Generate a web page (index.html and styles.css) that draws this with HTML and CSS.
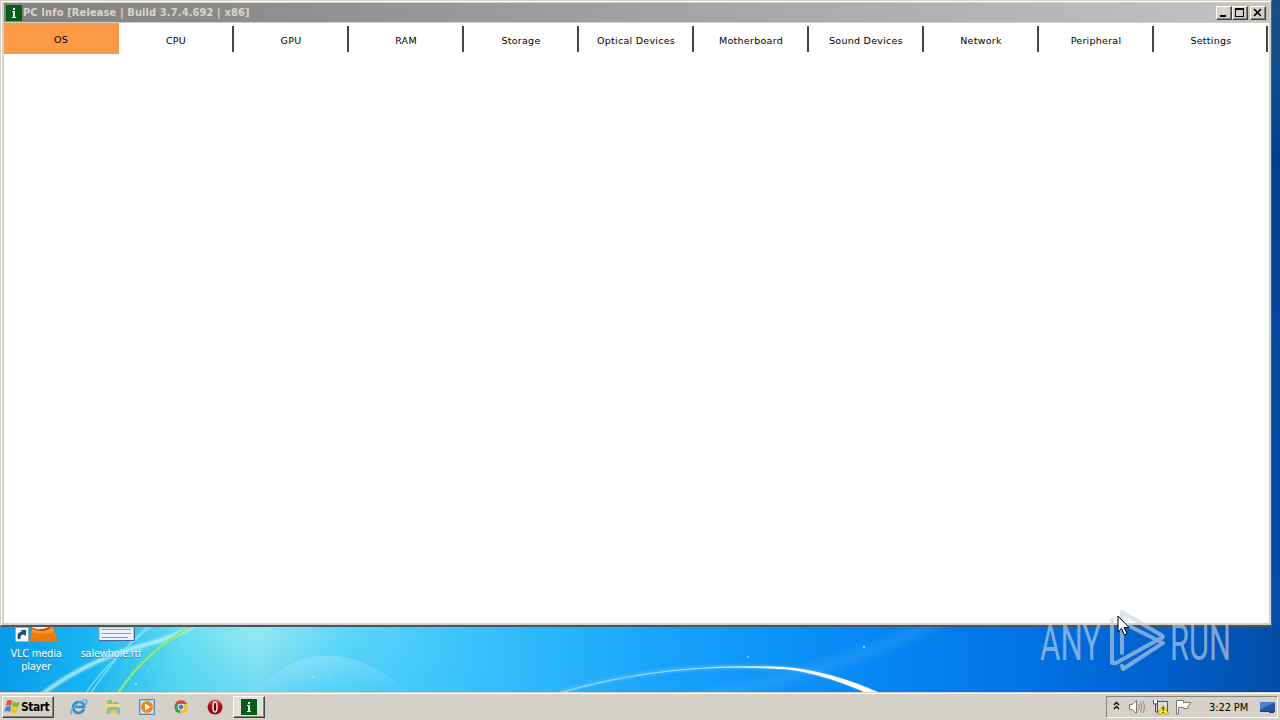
FILE: index.html
```html
<!DOCTYPE html>
<html lang="en">
<head>
<meta charset="utf-8">
<title>PC Info</title>
<link rel="stylesheet" href="styles.css">
</head>
<body>
<main class="desktop">
  <svg class="wallpaper" viewBox="0 0 1280 692" aria-hidden="true">
    <defs>
      <linearGradient id="sky"><stop offset="0" stop-color="#079be9"/><stop offset=".07" stop-color="#18b5f2"/><stop offset=".14" stop-color="#60dcf0"/><stop offset=".2" stop-color="#94e8f1"/><stop offset=".27" stop-color="#5bd6f8"/><stop offset=".38" stop-color="#35bffb"/><stop offset=".53" stop-color="#16a0fa"/><stop offset=".66" stop-color="#078af5"/><stop offset=".8" stop-color="#0073e4"/><stop offset=".91" stop-color="#0060cc"/><stop offset="1" stop-color="#014ba5"/></linearGradient>
      <linearGradient id="edge" x2="0" y2="1"><stop offset="0" stop-color="#154f80"/><stop offset=".12" stop-color="#104b8d"/><stop offset=".25" stop-color="#043f8d"/><stop offset=".65" stop-color="#0249a2"/><stop offset="1" stop-color="#034ca8"/></linearGradient>
      <linearGradient id="dome" x2="0" y2="1"><stop offset="0" stop-color="#fff" stop-opacity=".2"/><stop offset="1" stop-color="#fff" stop-opacity=".02"/></linearGradient>
      <radialGradient id="low"><stop offset="0" stop-color="#20bbfa" stop-opacity=".4"/><stop offset="1" stop-color="#20bbfa" stop-opacity="0"/></radialGradient>
      <linearGradient id="arc"><stop offset="0" stop-color="#78d8ff"/><stop offset=".5" stop-color="#b2e4ff"/><stop offset=".7" stop-color="#fff"/></linearGradient>
      <filter id="soft" x="-20%" y="-50%" width="140%" height="200%"><feGaussianBlur stdDeviation="1.2"/></filter>
      <filter id="haze" x="-20%" y="-50%" width="140%" height="200%"><feGaussianBlur stdDeviation="5"/></filter>
    </defs>
    <rect width="1280" height="692" fill="url(#sky)"/>
    <ellipse cx="290" cy="700" rx="240" ry="66" fill="url(#low)"/>
    <rect x="1271" width="9" height="626" fill="url(#edge)"/>
    <path d="M252 692Q326 619 408 692Z" fill="url(#dome)"/>
    <path d="M680 700Q830 676 940 620" stroke="#5cbbff" stroke-width="9" opacity=".3" fill="none" filter="url(#haze)"/>
    <g fill="none">
      <path d="M42 694Q91 658 148 644Q176 637 195 625" stroke="#c8f5ff" stroke-width="4" opacity=".8" filter="url(#soft)"/>
      <path d="M85 694Q106 663 153 625M90 694Q112 660 147 627" stroke="#9ce7ff" stroke-width="1.4" opacity=".75"/>
      <path d="M118 693Q148 649 192 626" stroke="#92e870" stroke-width="2.3"/>
    </g>
    <path d="M560 692C655 665 735 665 785 668C817 671 844 680 868 692" fill="none" stroke="#57b9ff" stroke-width="5" opacity=".55" filter="url(#soft)"/>
    <path d="M560 692C655 665 735 665 785 667Q830 671 878 692H864C828 676 795 669 778 669C724 666 655 667 566 692Z" fill="url(#arc)"/>
    <g fill="#a8e8ff" opacity=".75"><circle cx="136" cy="684" r="1.3"/><circle cx="148" cy="670" r=".8"/><circle cx="155" cy="665" r=".7"/><circle cx="313" cy="677" r="1.2"/><circle cx="329" cy="675" r=".8"/><circle cx="748" cy="657" r="1"/><circle cx="864" cy="647" r="1.2"/></g>
  </svg>

  <div class="shortcut vlc">
    <svg width="48" height="18" viewBox="0 0 48 18"><path d="M18 0H39L44 14.500H16Z" fill="#ed7c0b"/><path d="M18 0H39L40 5Q29 8 18 5Z" fill="#f89722"/><path d="M16 0H37Q34 4 28 4Q20 4 16 0Z" fill="#d2450d"/><path d="M17 0H35Q29 3 22 2Z" fill="#eee"/><path d="M1.500.500H14.500V14.500H1.500Z" fill="#f6f8fa" stroke="#aaa"/><path d="M4 12C3 7 4 5 8 5L6.500 3H12V9L10 7.500C7 7.500 6 9 6.500 12Z" fill="#174f8d"/></svg>
    <span>VLC media<br>player</span>
  </div>
  <div class="shortcut document">
    <svg width="38" height="18" viewBox="0 0 38 18"><path d="M1 0H36V13.500H1Z" fill="#edf3fc" stroke="#8da0c7"/><path d="M3.500 2.500H33M3.500 6.500H33M3.500 10.500H30" stroke="#809bd0"/><path d="M1 13.500H36.500V0" stroke="#496597" fill="none"/></svg>
    <span>salewhole.rtf</span>
  </div>

  <section class="window">
    <header class="titlebar">
      <svg class="app-icon" width="16" height="16" viewBox="0 0 16 16"><path d="M0 0H16V16H0Z" fill="#075c18"/><path d="M7 3H9V5H7ZM6 6H9V12H10V13H6V12H7V7H6Z" fill="#e9efe9"/></svg>
      <h1>PC Info [Release | Build 3.7.4.692 | x86]</h1>
      <div class="controls">
        <button aria-label="Minimize"><svg width="12" height="10" viewBox="0 0 12 10"><path d="M2 7H8V9H2Z"/></svg></button>
        <button aria-label="Maximize"><svg width="12" height="10" viewBox="0 0 12 10"><path fill-rule="evenodd" d="M1 0H10V9H1ZM2 2V8H9V2Z"/></svg></button>
        <button class="close" aria-label="Close"><svg width="12" height="10" viewBox="0 0 12 10"><path d="M2 1L9 8M9 1L2 8" stroke="#000" stroke-width="1.7"/></svg></button>
      </div>
    </header>
    <nav class="tabs">
      <span class="selected">OS</span><span>CPU</span><span>GPU</span><span>RAM</span><span>Storage</span><span>Optical Devices</span><span>Motherboard</span><span>Sound Devices</span><span>Network</span><span>Peripheral</span><span>Settings</span>
    </nav>
  </section>

  <svg class="watermark" width="230" height="80" viewBox="0 0 230 80">
    <g class="brand"><text x="4" y="54" textLength="61" lengthAdjust="spacingAndGlyphs">ANY</text><text x="134" y="54" textLength="61" lengthAdjust="spacingAndGlyphs">RUN</text></g>
    <path class="mark" d="M76 14V57L80 57L127 31M86 47V6L126 29.500M85 16L127 37L87 63L86 60"/>
  </svg>
  <svg class="pointer" width="14" height="22" viewBox="0 0 14 22"><path d="M1 1V17L4.500 13.500L7.500 20L10 18.800L7 12.500H12Z" fill="#fff" stroke="#000"/></svg>
</main>

<footer class="taskbar">
  <button class="start">
    <svg width="18" height="16" viewBox="0 0 16 16"><path d="M3 2Q6 0 8 2L7 7Q4 5 2 7Z" fill="#e65320"/><path d="M9 2Q12 5 16 3L14 8Q11 9 8 7Z" fill="#80ba34"/><path d="M2 8Q5 6 7 8L6 13Q3 11 0 13Z" fill="#328bd0"/><path d="M8 8Q11 10 14 9L12 14Q9 15 6 13Z" fill="#f7bd20"/></svg>
    <span>Start</span>
  </button>
  <div class="launchers">
    <svg width="18" height="18" viewBox="0 0 18 18"><path d="M14 11Q12 15 8 15Q3 14 3 9Q4 4 9 4Q14 4 14 9H5" fill="none" stroke="#318fd0" stroke-width="2.700"/><path d="M2 16Q-1 14 5 8Q12 1 16 2Q18 3 15 7" fill="none" stroke="#5baada" stroke-width="1.500"/></svg>
    <svg width="18" height="18" viewBox="0 0 18 18"><path d="M2 3H8L9 5H16V15H2Z" fill="#e4c25c"/><path d="M4 2H8V7H4ZM9 4H14V7H9Z" fill="#83c484"/><path d="M2 6H16V12H2Z" fill="#f5dc83"/><path d="M3 16V11Q3 9 5 9H13Q16 9 16 11V16H13V12H6V16Z" fill="#7dbce2"/></svg>
    <svg width="18" height="18" viewBox="0 0 18 18"><path d="M1.500 1.500H16.500V16.500H1.500Z" fill="#9dcbed" stroke="#5589bc"/><path d="M3 3H15V15H3Z" fill="#d6e9f5"/><circle cx="9" cy="9" r="6" fill="#f28817"/><path d="M7 5.500V12.500L12.500 9Z" fill="#fff"/></svg>
    <svg width="18" height="18" viewBox="0 0 18 18"><path d="M9 9L3.400 5.500A6.600 6.600 0 0 1 15 6H9Z" fill="#dc4737"/><path d="M9 9L8 15.500A6.600 6.600 0 0 1 3.400 5.500Z" fill="#3b9d51"/><path d="M9 9V6H15A6.600 6.600 0 0 1 8 15.500Z" fill="#f0c52b"/><circle cx="9" cy="9" r="3.300" fill="#fff"/><circle cx="9" cy="9" r="2.500" fill="#4284cd"/></svg>
    <svg width="18" height="18" viewBox="0 0 18 18"><defs><linearGradient id="red" x2="0" y2="1"><stop stop-color="#e16763"/><stop offset=".4" stop-color="#b40e16"/><stop offset="1" stop-color="#7c050c"/></linearGradient></defs><circle cx="9" cy="9" r="7.500" fill="url(#red)"/><ellipse cx="9" cy="9" rx="2" ry="5" fill="#670910" stroke="#eee" stroke-width="1.500"/></svg>
  </div>
  <div class="task"><svg width="16" height="16" viewBox="0 0 16 16"><path d="M0 0H16V16H0Z" fill="#075c18"/><path d="M7 3H9V5H7ZM6 6H9V12H10V13H6V12H7V7H6Z" fill="#e9efe9"/></svg></div>
  <div class="tray">
    <svg class="chevrons" width="8" height="10" viewBox="0 0 8 10"><path d="M1 4L3.500 1.500L6 4M1 8L3.500 5.500L6 8" fill="none" stroke="#000" stroke-width="1.300"/></svg>
    <svg class="sound" width="18" height="16" viewBox="0 0 18 16"><path d="M1.500 5.500H4L8.500 1.500V14.500L4 10.500H1.500Z" fill="#fff" stroke="#777"/><path d="M10.500 5Q12.500 8 10.500 11M12.500 3.500Q15.500 8 12.500 12.500M14.500 2Q18.500 8 14.500 14" fill="none" stroke="#8b8b8b"/></svg>
    <svg class="network" width="18" height="16" viewBox="0 0 18 16"><path d="M5.500 2.500H15.500V13.500H5.500Z" fill="#ddd" stroke="#555"/><path d="M1.500 1V5H5.500V1M3.500 5V13H8" fill="none" stroke="#555"/><path d="M2 1H5V4H2Z" fill="#fff"/><path d="M11 6L17 15H5Z" fill="#ffe326" stroke="#aa8c00" stroke-width=".6"/><path d="M10.500 8H11.700L11.500 12H10.700ZM10.500 13H11.700V14H10.500Z"/></svg>
    <svg class="flag" width="18" height="16" viewBox="0 0 18 16"><path d="M1.500 15V1.500H8.500V3.500H16Q13 6 12.500 9.500H8.500V8.500H3.500V15Z" fill="#fff" stroke="#777"/></svg>
    <time>3:22 PM</time>
    <svg class="show" width="17" height="14" viewBox="0 0 17 14"><path d="M1 2H16V11H1Z" fill="#2458a8"/><path d="M1 2H16V3Q9 4 1 10Z" fill="#4a82cb"/><path d="M1 11H16V12H1ZM10 12H15V13H10Z" fill="#234070"/></svg>
  </div>
</footer>
</body>
</html>
```
FILE: styles.css
```css
* { box-sizing: border-box; }
body { margin: 0; width: 1280px; height: 720px; overflow: hidden; display: flex; flex-direction: column; font: 11px "DejaVu Sans Condensed", "DejaVu Sans", sans-serif; color: #000; }
svg { display: block; flex: none; }
button { font: inherit; color: inherit; margin: 0; padding: 0; }
.desktop { position: relative; height: 692px; overflow: hidden; background: #0759bc; }
.wallpaper { position: absolute; inset: 0; width: 1280px; height: 692px; }
.window { position: absolute; left: 0; top: 0; width: 1272px; height: 627px; padding: 2px 2px 2px 3px; background: #fff; border: 1px solid #d5d0c8; border-right-color: #555f68; border-bottom: 2px solid #485660; box-shadow: inset 1px 1px #fff, inset 3px 3px #d5d0c8, inset -2px -2px #d5d0c8; }
.titlebar { height: 20px; padding: 2px 3px 2px 2px; display: flex; align-items: center; background: linear-gradient(90deg, #808080, #c3c3c3); border-bottom: 1px solid #d5d0c8; }
.titlebar h1 { margin: 0 0 0 1px; font-size: 11px; font-weight: 700; line-height: 15px; letter-spacing: .12px; white-space: nowrap; color: #d8d5ce; }
.controls { display: flex; margin-left: auto; }
.controls button { width: 16px; height: 14px; padding: 1px; background: #d5d0c8; border: 1px solid; border-color: #fff #424242 #424242 #fff; box-shadow: inset -1px -1px #858580; }
.controls .close { margin-left: 2px; }
.tabs { height: 31px; display: grid; grid-template-columns: repeat(11, 115px); overflow: hidden; background: #fff; font: 9.5px "DejaVu Sans", sans-serif; letter-spacing: .27px; }
.tabs span { position: relative; display: flex; align-items: center; justify-content: center; padding: 4px 1px 0 0; white-space: nowrap; }
.tabs span:not(.selected)::after { content: ""; position: absolute; right: 0; top: 3px; width: 2px; height: 26px; background: #454545; }
.tabs span:last-child::after { right: 1px; }
.tabs .selected { background: #fb9945; padding-top: 2px; }
.shortcut { position: absolute; display: flex; flex-direction: column; align-items: center; gap: 2px; top: 627px; color: #fff; text-align: center; line-height: 13px; letter-spacing: -.25px; text-shadow: 0 1px 1px #247baa; }
.vlc { left: 8px; width: 56px; }
.vlc svg { margin-left: 3px; }
.document { left: 76px; width: 70px; }
.document svg { margin-left: 12px; }
.shortcut span { white-space: nowrap; }
.watermark { position: absolute; left: 1036px; top: 606px; }
.brand { font: 400 50px Roboto, sans-serif; fill: #c5d4e4; fill-opacity: .65; }
.mark { fill: none; stroke: #c5d4e4; stroke-opacity: .62; stroke-width: 4; stroke-linejoin: round; stroke-linecap: round; }
.pointer { position: absolute; left: 1117px; top: 615px; }
.taskbar { height: 28px; padding: 1px 2px 2px; display: flex; align-items: center; background: #d5d0c8; border-top: 1px solid #d5d0c8; box-shadow: inset 0 1px #fff; }
.start { display: flex; align-items: center; gap: 0; width: 52px; height: 22px; margin-top: 2px; padding-left: 0; background: #d5d0c8; border: 1px solid; border-color: #fff #414141 #414141 #fff; box-shadow: inset -1px -1px #858580; font-size: 12px; font-weight: 700; letter-spacing: -.5px; }
.launchers { display: flex; gap: 16px; margin: 1px 0 0 16px; }
.task { display: flex; align-items: center; justify-content: center; width: 32px; height: 22px; margin: 2px 0 0 9px; background: #e3dfda; border: 1px solid; border-color: #fff #414141 #414141 #fff; box-shadow: inset -1px -1px #858580; }
.tray { display: flex; align-items: center; width: 172px; height: 22px; margin: 2px 0 0 auto; padding-left: 6px; border: 1px solid; border-color: #858580 #fff #fff #858580; }
.chevrons { margin-top: -2px; }
.sound { margin-left: 7px; }
.network { margin-left: 6px; }
.flag { margin-left: 5px; }
.tray time { margin-left: 16px; font-size: 11px; letter-spacing: -.1px; white-space: nowrap; }
.show { margin: 0 1px 0 auto; }
```
